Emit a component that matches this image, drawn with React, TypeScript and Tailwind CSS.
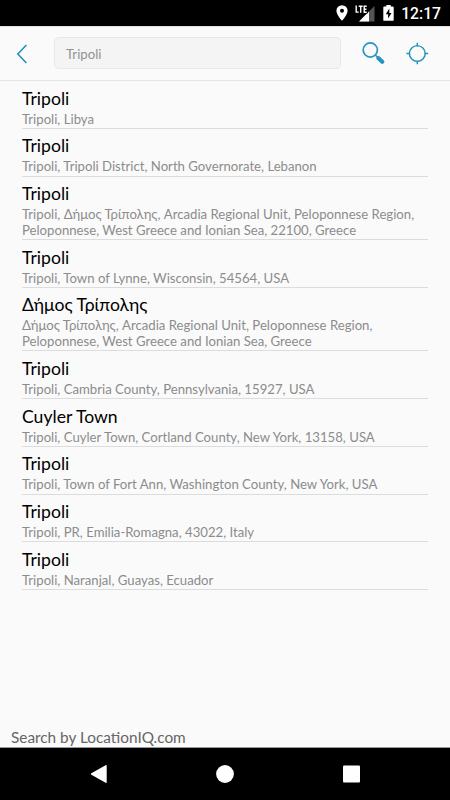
type Place = {
  name: string;
  address: string;
};

const places: Place[] = [
  { name: "Tripoli", address: "Tripoli, Libya" },
  { name: "Tripoli", address: "Tripoli, Tripoli District, North Governorate, Lebanon" },
  {
    name: "Tripoli",
    address:
      "Tripoli, Δήμος Τρίπολης, Arcadia Regional Unit, Peloponnese Region, Peloponnese, West Greece and Ionian Sea, 22100, Greece",
  },
  { name: "Tripoli", address: "Tripoli, Town of Lynne, Wisconsin, 54564, USA" },
  {
    name: "Δήμος Τρίπολης",
    address:
      "Δήμος Τρίπολης, Arcadia Regional Unit, Peloponnese Region, Peloponnese, West Greece and Ionian Sea, Greece",
  },
  { name: "Tripoli", address: "Tripoli, Cambria County, Pennsylvania, 15927, USA" },
  { name: "Cuyler Town", address: "Tripoli, Cuyler Town, Cortland County, New York, 13158, USA" },
  { name: "Tripoli", address: "Tripoli, Town of Fort Ann, Washington County, New York, USA" },
  { name: "Tripoli", address: "Tripoli, PR, Emilia-Romagna, 43022, Italy" },
  { name: "Tripoli", address: "Tripoli, Naranjal, Guayas, Ecuador" },
];

function StatusBar() {
  return (
    <div className="flex h-[26px] shrink-0 items-center justify-end bg-black pr-[9px] text-white">
      <svg width="12" height="16" viewBox="0 0 12 16" className="mr-[7px]" fill="currentColor">
        <path
          fillRule="evenodd"
          d="M6 0.2A5.6 5.6 0 0 0 .4 5.8C.4 9.8 6 15.8 6 15.8s5.6-6 5.6-10A5.6 5.6 0 0 0 6 .2Zm0 3.6a2 2 0 1 1 0 4 2 2 0 0 1 0-4Z"
        />
      </svg>
      <svg width="20" height="17" viewBox="0 0 20 17" className="mr-[8px]">
        <path d="M19.500 1v15.500H4Z" fill="#555" />
        <path d="M14 6.500v10H4Z" fill="#fff" />
        <path d="M0 0h12.500v8.500H0Z" fill="#000" />
        <path
          d="M1.200.5v6.600h2.500M3.700 1.200h4M5.700 1.200v6.600M11.700 1.200H9.200v6h2.500M9.200 4.200h2.300"
          fill="none"
          stroke="#fff"
          strokeWidth="1.400"
        />
      </svg>
      <svg width="11" height="16" viewBox="0 0 11 16" className="mr-[7px]">
        <path
          d="M3.300 0h4.400v1.600h2.100c.5 0 .9.400.9.900v12.400c0 .5-.4.900-.9.900H1.200a.9.900 0 0 1-.9-.9V2.500c0-.5.400-.9.900-.9h2.100Z"
          fill="#fff"
        />
        <path d="M6.300 3.600 2.800 9.300h2.300v4.300l3.400-5.700H6.300Z" fill="#000" />
      </svg>
      <span className="pt-px font-['Roboto',sans-serif] text-[15.700px] leading-[26px] font-medium">12:17</span>
    </div>
  );
}

function SearchHeader() {
  return (
    <header className="flex h-[55px] shrink-0 items-center border-t border-b border-t-[#e0e0e0] border-b-[#e4e4e4]">
      <button className="ml-[16px] h-[20px] w-[12px]" aria-label="Back">
        <svg width="12" height="20" viewBox="0 0 12 20" fill="none" stroke="#1a90b8" strokeWidth="1.500">
          <path d="M10.400 1 1.800 10l8.600 9" />
        </svg>
      </button>
      <div className="mb-px ml-[26px] h-[32px] w-[287px] rounded-[5px] border border-[#e8e8e8] bg-[#f4f4f4] px-[11px] text-[13.200px] leading-[32px] text-[#929292]">
        Tripoli
      </div>
      <button className="ml-[21px] h-[23px] w-[23px]" aria-label="Search">
        <svg width="23" height="23" viewBox="0 0 23 23" fill="none" stroke="#2795bd">
          <circle cx="8.300" cy="8" r="7.100" strokeWidth="1.700" />
          <path d="m13.300 13 3 3" strokeWidth="1.700" />
          <path d="m16.500 16.200 3.700 3.600" strokeWidth="4.200" strokeLinecap="round" />
        </svg>
      </button>
      <button className="ml-[21px] h-[23px] w-[23px]" aria-label="Current location">
        <svg width="23" height="23" viewBox="0 0 23 23" fill="none" stroke="#1f92ba" strokeWidth="1.400">
          <circle cx="11.300" cy="11.500" r="7.900" />
          <path d="M11.300.8v3.600M11.300 18.700v3.500M.4 11.500h3.700M18.700 11.500h3.500" />
        </svg>
      </button>
    </header>
  );
}

function PlaceRow({ name, address }: Place) {
  return (
    <li className="border-b border-[#dcdcdc] pt-[6.500px] pb-[0.700px]">
      <p className="mb-[2px] text-[17.600px] leading-[22px] text-black">{name}</p>
      <p className="text-[13.170px] leading-[15.600px] text-[#8c8c8c]">{address}</p>
    </li>
  );
}

function NavigationBar() {
  return (
    <nav className="flex h-[53px] shrink-0 items-center justify-center gap-[108px] border-t border-[#999] bg-black text-white">
      <svg width="18" height="20" viewBox="0 0 18 20" fill="currentColor">
        <path d="M16.700 1.700v16.600c0 .6-.6.800-1.100.500L1.400 10.800c-.6-.4-.6-1.100 0-1.500L15.600 1.200c.5-.3 1.100-.1 1.100.5Z" />
      </svg>
      <svg width="18" height="18" viewBox="0 0 18 18" fill="currentColor">
        <circle cx="9" cy="9" r="8.900" />
      </svg>
      <svg width="18" height="18" viewBox="0 0 18 18" fill="currentColor">
        <rect x="1" y=".5" width="17" height="17" rx="1" />
      </svg>
    </nav>
  );
}

export default function App() {
  return (
    <div className="flex h-[800px] w-[450px] flex-col overflow-hidden bg-[#fafafa] font-['Lato','Noto_Sans',sans-serif]">
      <StatusBar />
      <SearchHeader />
      <main className="flex-1 px-[22px] pt-[0.200px]">
        <ul>
          {places.map((place, i) => (
            <PlaceRow key={i} {...place} />
          ))}
        </ul>
      </main>
      <p className="px-[11px] text-[15.350px] leading-[20px] text-[#666]">Search by LocationIQ.com</p>
      <NavigationBar />
    </div>
  );
}
